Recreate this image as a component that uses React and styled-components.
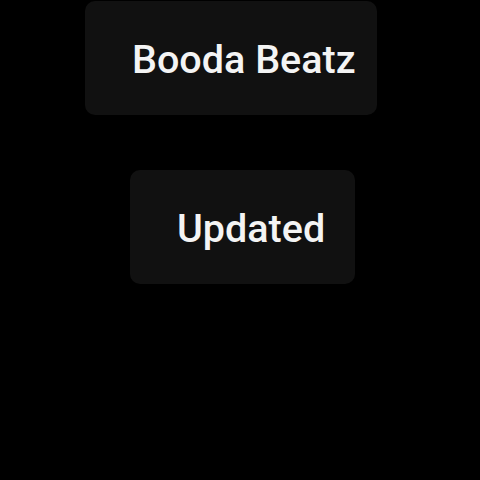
import React from 'react';
import styled, { createGlobalStyle } from 'styled-components';

const GlobalStyle = createGlobalStyle`
  html, body {
    margin: 0;
    padding: 0;
    background: #000;
  }
  body {
    font-family: Roboto, "Noto Sans", sans-serif;
  }
`;

const Screen = styled.div`
  width: 480px;
  height: 480px;
  background: #000;
  display: flex;
  flex-direction: column;
  padding-top: 1px;
  gap: 55px;
  box-sizing: border-box;
`;

const Card = styled.div`
  width: ${(p) => p.$width}px;
  height: 114px;
  margin-left: ${(p) => p.$left}px;
  box-sizing: border-box;
  padding: 3px 0 0 47px;
  display: flex;
  align-items: center;
  background: #111;
  border-radius: 10px;
`;

const Label = styled.span`
  color: #f4f4f4;
  font-size: 39.5px;
  font-weight: 500;
  line-height: 1;
  white-space: nowrap;
`;

export default function App() {
  return (
    <>
      <GlobalStyle />
      <Screen>
        <Card $left={85} $width={292}>
          <Label>Booda Beatz</Label>
        </Card>
        <Card $left={130} $width={225}>
          <Label>Updated</Label>
        </Card>
      </Screen>
    </>
  );
}
